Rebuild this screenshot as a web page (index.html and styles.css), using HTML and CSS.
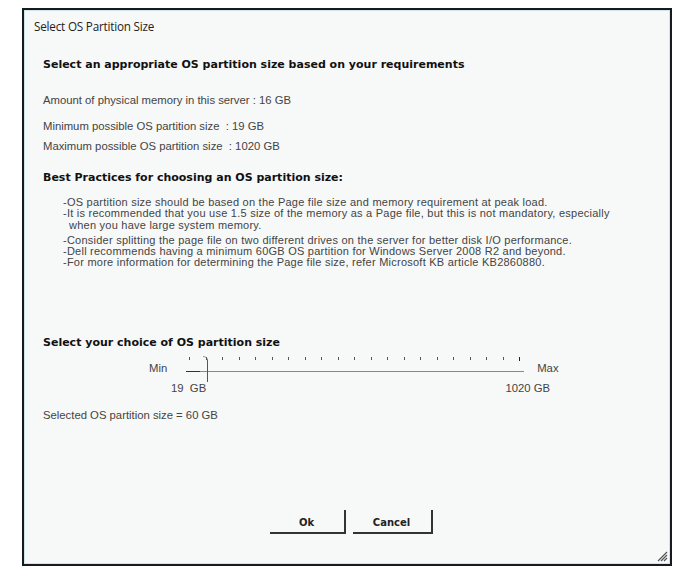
FILE: index.html
```html
<!DOCTYPE html>
<html lang="en">
	<head>
		<meta charset="utf-8">
		<title>Select OS Partition Size</title>
		<link rel="stylesheet" href="styles.css">
	</head>

	<body>
		<div class="dialog">
			<div class="title">Select OS Partition Size</div>

			<div class="content">
				<h2 class="top">Select an appropriate OS partition size based on your requirements</h2>

				<div class="facts">
					<p class="first">Amount of physical memory in this server : 16 GB</p>
					<p>Minimum possible OS partition size&nbsp; : 19 GB</p>
					<p>Maximum possible OS partition size&nbsp; : 1020 GB</p>
				</div>

				<h2>Best Practices for choosing an OS partition size:</h2>
				<ul class="tips">
					<li>-OS partition size should be based on the Page file size and memory requirement at peak load.</li>
					<li>-It is recommended that you use 1.5 size of the memory as a Page file, but this is not mandatory, especially<br><span class="cont">when you have large system memory.</span></li>
					<li class="gap">-Consider splitting the page file on two different drives on the server for better disk I/O performance.</li>
					<li>-Dell recommends having a minimum 60GB OS partition for Windows Server 2008 R2 and beyond.</li>
					<li>-For more information for determining the Page file size, refer Microsoft KB article KB2860880.</li>
				</ul>

				<h2 class="choice">Select your choice of OS partition size</h2>
				<div class="slider">
					<span class="end">Min</span>
					<div class="track">
						<div class="ticks">
							<i></i><i></i><i></i><i></i><i></i><i></i><i></i>
							<i></i><i></i><i></i><i></i><i></i><i></i><i></i>
							<i></i><i></i><i></i><i></i><i></i><i></i><i class="last"></i>
						</div>
						<div class="line">
							<div class="filled"></div>
							<div class="thumb"></div>
						</div>
					</div>
					<span class="end">Max</span>
				</div>
				<div class="range">
					<span>19&nbsp; GB</span>
					<span>1020 GB</span>
				</div>
				<p class="selected">Selected OS partition size = 60 GB</p>
			</div>

			<div class="buttons">
				<button class="ok">Ok</button>
				<button class="cancel">Cancel</button>
			</div>

			<!-- resize grip in the corner -->
			<svg class="grip" width="12" height="12" viewBox="0 0 12 12">
				<path d="M11 2 L2 11 M11 5 L5 11 M11 8 L8 11" stroke="#555" stroke-width="1.2"/>
			</svg>
		</div>
	</body>
</html>
```

FILE: styles.css
```css
body {
	margin: 0;
	background: #ffffff;
	font-family: "Liberation Sans", Arial, sans-serif;
	font-size: 11.3px;
	color: #333;
}

.dialog {
	position: relative;
	margin: 8px 0 0 22px;
	width: 646px;
	height: 554px;
	border: 2px solid #161b20;
	box-shadow: inset 0 0 0 1px #cfe6e8;
	background: #f7f8f8;
	display: flex;
	flex-direction: column;
}

.title {
	font-family: "Open Sans", "Liberation Sans", sans-serif;
	font-size: 11.7px;
	color: #222;
	padding: 8px 0 0 10px;
	letter-spacing: -0.2px;
}

.content {
	padding: 0 0 0 19px;
	flex: 1;
}

h2 {
	font-family: "DejaVu Sans", Verdana, sans-serif;
	font-size: 11px;
	font-weight: bold;
	color: #111;
	margin: 17px 0 0 0;
	line-height: 14px;
}

h2.top {
	margin-top: 24px;
}

.facts p {
	margin: 0;
	line-height: 20px;
	color: #444;
}

.facts .first {
	margin-top: 18px;
	margin-bottom: 6px;
}

.facts + h2 {
	margin-top: 15px;
}

.tips {
	list-style: none;
	margin: 12px 0 0 0;
	padding: 0 0 0 20px;
	line-height: 11.3px;
	font-size: 11px;
	letter-spacing: 0.24px;
	color: #444;
}

.tips .gap {
	margin-top: 4px;
}

.tips .cont {
	padding-left: 6px;
}

h2.choice {
	margin-top: 67px;
}

.slider {
	display: flex;
	align-items: flex-end;
	margin: 7px 0 0 106px;
	width: 430px;
}

.end {
	color: #444;
	line-height: 12px;
	margin-bottom: -2px;
}

.track {
	width: 338px;
	margin: 0 13px 0 19px;
	position: relative;
}

.ticks {
	display: flex;
	justify-content: space-between;
	padding: 0 4px 0 3px;
	height: 4px;
}

.ticks i {
	width: 1px;
	height: 3px;
	background: #555;
}

.ticks .last {
	height: 4px;
	background: #222;
}

.line {
	position: relative;
	height: 10px;
	border-bottom: 1px solid #888;
}

.filled {
	position: absolute;
	left: 0;
	bottom: -1px;
	width: 14px;
	height: 1px;
	background: #333;
}

/* slider thumb, sitting on the track */
.thumb {
	position: absolute;
	left: 17px;
	top: -5px;
	width: 4px;
	height: 25px;
	border-right: 1px solid #555;
	border-top: 1px solid #999;
	border-top-right-radius: 5px;
}

.range {
	display: flex;
	justify-content: space-between;
	width: 379px;
	margin: 9px 0 0 128px;
	color: #444;
	line-height: 14px;
}

.selected {
	margin: 14px 0 0 0;
	color: #444;
}

.buttons {
	display: flex;
	justify-content: center;
	gap: 7px;
	padding: 0 0 30px 0;
	margin-left: 8px;
}

button {
	font-family: "DejaVu Sans", Verdana, sans-serif;
	font-size: 10px;
	font-weight: bold;
	color: #222;
	background: #f7f8f8;
	border: none;
	border-right: 2px solid #333;
	border-bottom: 2px solid #333;
	height: 24px;
	padding: 2px 0 0 0;
}

.ok {
	width: 76px;
}

.cancel {
	width: 80px;
}

.grip {
	position: absolute;
	right: 2px;
	bottom: 2px;
}
```
